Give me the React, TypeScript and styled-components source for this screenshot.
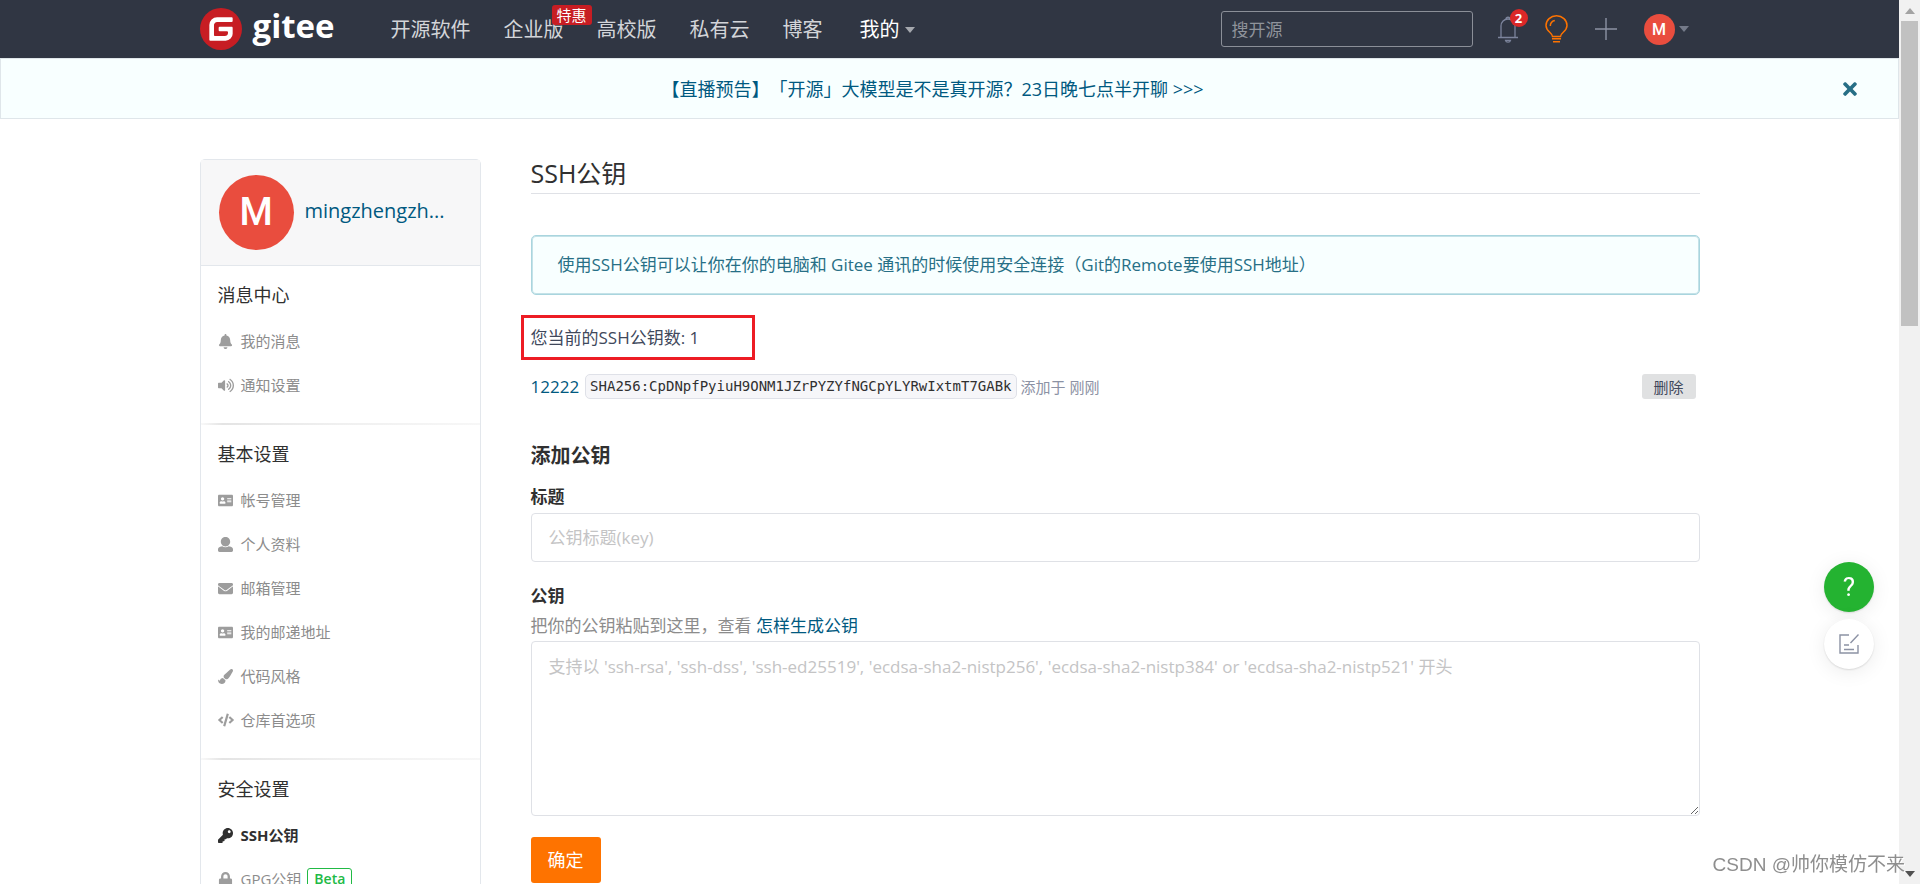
import React from 'react';
import styled, { createGlobalStyle } from 'styled-components';
import {
  FaAddressCard,
  FaBell,
  FaCode,
  FaEnvelope,
  FaKey,
  FaLock,
  FaPaintBrush,
  FaTimes,
  FaVolumeUp,
} from 'react-icons/fa';

const GlobalStyle = createGlobalStyle`
  *, *::before, *::after { box-sizing: border-box; }
  body {
    margin: 0;
    overflow: hidden;
    background: #fff;
    color: #40485b;
    font-family: "Open Sans", "Noto Sans CJK SC", sans-serif;
    font-size: 17px;
    line-height: 24px;
  }
  button, input, textarea { font: inherit; }
  a { color: #005980; text-decoration: none; }
  h1, h2, h3, p, ul { margin: 0; padding: 0; }
`;

const Window = styled.div`
  display: grid;
  grid-template-columns: minmax(0, 1fr) 21px;
  height: 100vh;
`;

const Page = styled.div`
  overflow: hidden;
`;

const Container = styled.div`
  width: 100%;
  max-width: 1500px;
  margin: 0 auto;
  display: flex;
`;

/* ---------- top bar ---------- */

const Header = styled.header`
  background: #303643;
  display: flex;
`;

const HeaderRow = styled(Container)`
  height: 58px;
  align-items: center;
`;

const Logo = styled.a`
  display: flex;
  align-items: center;
  gap: 11px;
  color: #fff;
  width: 191px;
`;

const LogoText = styled.span`
  font-size: 33px;
  font-weight: 700;
  line-height: 40px;
  padding-bottom: 6px;
`;

const Nav = styled.nav`
  display: flex;
  align-items: center;
  gap: 33px;
  flex: 1;
  padding-top: 2px;
  font-size: 20px;
  line-height: 30px;
`;

const NavLink = styled.a`
  position: relative;
  color: #d3d5d9;
`;

const Promo = styled.span`
  position: absolute;
  left: 48px;
  top: -10px;
  padding: 0 5px;
  border-radius: 3px;
  background: #c71d23;
  color: #fff;
  font-size: 15px;
  line-height: 20px;
  white-space: nowrap;
`;

const NavMenu = styled.button`
  display: flex;
  align-items: center;
  gap: 5px;
  padding: 0 4px;
  border: 0;
  background: none;
  color: #fff;
`;

const Caret = styled.span<{ $color: string }>`
  border: 5px solid transparent;
  border-top: 6px solid ${(p) => p.$color};
  border-bottom: 0;
`;

const Search = styled.input`
  width: 252px;
  height: 36px;
  padding: 0 10px;
  border: 1px solid #8b8f98;
  border-radius: 3px;
  background: transparent;
  color: #fff;
  &::placeholder { color: #8f939b; opacity: 1; }
`;

const Tools = styled.div`
  display: flex;
  align-items: center;
  gap: 27px;
  padding: 0 11px 0 25px;
`;

const ToolButton = styled.button`
  position: relative;
  display: flex;
  align-items: center;
  gap: 4px;
  padding: 0;
  border: 0;
  background: none;
`;

const Count = styled.span`
  position: absolute;
  left: 12px;
  top: -7px;
  width: 18px;
  height: 18px;
  border-radius: 50%;
  background: #db2828;
  color: #fff;
  font-size: 13px;
  font-weight: 700;
  line-height: 18px;
  text-align: center;
`;

const Avatar = styled.span<{ $size: number; $font: number }>`
  flex: none;
  width: ${(p) => p.$size}px;
  height: ${(p) => p.$size}px;
  border-radius: 50%;
  background: #e94d3e;
  color: #fff;
  font-family: Roboto, sans-serif;
  font-weight: 500;
  font-size: ${(p) => p.$font}px;
  line-height: ${(p) => p.$size}px;
  text-align: center;
`;

const Banner = styled.div`
  display: flex;
  align-items: center;
  height: 61px;
  padding: 0 38px 0 24px;
  border: 1px solid #dfe6ea;
  background: #f8ffff;
`;

const BannerLink = styled.a`
  flex: 1;
  font-size: 18px;
  text-align: center;
  text-spacing-trim: space-all;
`;

const CloseButton = styled.button`
  display: flex;
  padding: 0;
  border: 0;
  background: none;
  color: #276f86;
`;

/* ---------- side bar ---------- */

const Body = styled(Container)`
  padding-top: 40px;
  gap: 50px;
  align-items: flex-start;
`;

const Sidebar = styled.aside`
  flex: none;
  width: 281px;
  border: 1px solid #e3e7ec;
  border-radius: 5px;
`;

const Profile = styled.div`
  display: flex;
  align-items: center;
  gap: 11px;
  height: 106px;
  padding: 0 18px;
  border-bottom: 1px solid #e3e7ec;
  background: #f7f7f8;
  font-size: 20px;
`;

const UserName = styled.a`
  padding-bottom: 4px;
`;

const Section = styled.section`
  padding: 17px 17px 16px;
  & + & {
    border-top: 2px solid;
    border-image: linear-gradient(to right, #fafafa, #e4e4e4 8%, #f0f0f0 50%, #f7f7f7) 1;
  }
`;

const SectionTitle = styled.h3`
  margin-bottom: 12px;
  color: #303030;
  font-size: 18px;
  font-weight: 400;
  line-height: 24px;
`;

const List = styled.ul`
  list-style: none;
`;

const ItemLink = styled.a<{ $active?: boolean }>`
  display: flex;
  align-items: center;
  height: 44px;
  color: ${(p) => (p.$active ? '#303030' : '#8c8c8c')};
  font-size: 15px;
  font-weight: ${(p) => (p.$active ? 700 : 400)};
`;

const ItemIcon = styled.span<{ $active?: boolean }>`
  display: flex;
  justify-content: center;
  width: 16px;
  margin-right: 7px;
  color: ${(p) => (p.$active ? '#303030' : '#9d9d9d')};
`;

const Beta = styled.span`
  margin-left: 6px;
  padding: 0 6px;
  border: 1px solid #21ba45;
  border-radius: 3px;
  color: #21ba45;
  font-size: 14px;
  font-weight: 600;
  line-height: 20px;
`;

/* ---------- main column ---------- */

const Main = styled.main`
  flex: 1;
  min-width: 0;
`;

const Title = styled.h1`
  padding-bottom: 6px;
  border-bottom: 1px solid #dfe1e6;
  color: #303030;
  font-size: 25px;
  font-weight: 400;
  line-height: 28px;
`;

const Notice = styled.p`
  margin-top: 41px;
  padding: 17px 26px;
  border: 1px solid #a9d5de;
  border-radius: 5px;
  box-shadow: inset 0 0 0 1px #c4e2e8;
  background: #f8ffff;
  color: #276f86;
`;

const KeyCount = styled.p`
  width: 234px;
  margin: 20px 0 14px -10px;
  padding: 8px 7px 7px;
  border: 3px solid #ed1c24;
`;

const KeyRow = styled.div`
  display: flex;
  align-items: center;
  height: 25px;
  padding-right: 4px;
`;

const Fingerprint = styled.code`
  margin: 0 4px 0 6px;
  padding: 0 4px;
  border: 1px solid #dfe1e8;
  border-radius: 5px;
  background: #f6f6f9;
  color: #303030;
  font-family: "DejaVu Sans Mono", monospace;
  font-size: 14px;
  line-height: 23px;
`;

const Added = styled.span`
  flex: 1;
  color: #8c92a4;
  font-size: 15px;
`;

const DeleteButton = styled.button`
  width: 54px;
  height: 25px;
  padding: 0;
  border: 0;
  border-radius: 3px;
  background: #e0e1e2;
  color: #40485b;
  font-size: 15px;
  line-height: 24px;
`;

const Form = styled.form`
  display: flex;
  flex-direction: column;
  margin-top: 42px;
`;

const FormTitle = styled.h2`
  margin-bottom: 14px;
  color: #303030;
  font-size: 20px;
  line-height: 30px;
`;

const Label = styled.label`
  margin-bottom: 4px;
  color: #303030;
  font-weight: 700;
`;

const TextInput = styled.input`
  height: 49px;
  margin-bottom: 22px;
  padding: 0 17px;
  border: 1px solid #dfe1e6;
  border-radius: 4px;
  outline: none;
  &::placeholder { color: #c4c4c5; opacity: 1; }
`;

const Hint = styled.p`
  padding: 2px 0 3px;
  color: #8c8c8c;
`;

const TextArea = styled.textarea`
  height: 175px;
  padding: 13px 17px;
  border: 1px solid #dfe1e6;
  border-radius: 4px;
  outline: none;
  resize: vertical;
  &::placeholder { color: #c4c4c5; opacity: 1; }
`;

const Submit = styled.button`
  align-self: flex-start;
  height: 46px;
  margin-top: 21px;
  padding: 0 17px;
  border: 0;
  border-radius: 3px;
  background: #fe7300;
  color: #fff;
  font-size: 18px;
`;

/* ---------- overlays ---------- */

const FloatButtons = styled.div`
  position: fixed;
  right: 46px;
  bottom: 215px;
  display: flex;
  flex-direction: column;
  gap: 7px;
`;

const RoundButton = styled.button<{ $fill: string }>`
  display: flex;
  align-items: center;
  justify-content: center;
  width: 50px;
  height: 50px;
  padding: 0;
  border: 0;
  border-radius: 50%;
  background: ${(p) => p.$fill};
  box-shadow: 0 1px 2px rgba(0, 0, 0, 0.12), 0 3px 20px rgba(0, 0, 0, 0.08);
  color: #fff;
  font-family: Roboto, sans-serif;
  font-size: 26px;
`;

const Watermark = styled.div`
  position: fixed;
  right: 15px;
  bottom: 5px;
  color: #8e8e8e;
  font-family: "Liberation Sans", "Noto Sans CJK SC", sans-serif;
  font-size: 19px;
  line-height: 28px;
  text-shadow: 1px 1px 0 #fff;
`;

const Scrollbar = styled.div`
  display: flex;
  flex-direction: column;
  align-items: center;
  background: #f1f1f1;
`;

const Thumb = styled.div`
  width: 17px;
  height: 305px;
  background: #c1c1c1;
`;

const ArrowBox = styled.div`
  display: flex;
  align-items: center;
  justify-content: center;
  height: 21px;
  &:last-child { margin-top: auto; }
`;

const UserIcon = () => (
  <svg width="15" height="15" viewBox="0 0 512 512" fill="currentColor">
    <path d="M256 0c88.366 0 160 71.634 160 160s-71.634 160-160 160S96 248.366 96 160 167.634 0 256 0zm183.283 333.821l-71.313-17.828c-74.923 53.89-165.738 41.864-223.94 0l-71.313 17.828C29.981 344.505 0 382.903 0 426.955V464c0 26.51 21.49 48 48 48h416c26.51 0 48-21.49 48-48v-37.045c0-44.052-29.981-82.45-72.717-93.134z" />
  </svg>
);

type Item = { label: string; icon: React.ReactNode; active?: boolean; beta?: boolean };

const sections: { title: string; items: Item[] }[] = [
  {
    title: '消息中心',
    items: [
      { label: '我的消息', icon: <FaBell size={15} /> },
      { label: '通知设置', icon: <FaVolumeUp size={17} /> },
    ],
  },
  {
    title: '基本设置',
    items: [
      { label: '帐号管理', icon: <FaAddressCard size={15} /> },
      { label: '个人资料', icon: <UserIcon /> },
      { label: '邮箱管理', icon: <FaEnvelope size={15} /> },
      { label: '我的邮递地址', icon: <FaAddressCard size={15} /> },
      { label: '代码风格', icon: <FaPaintBrush size={15} /> },
      { label: '仓库首选项', icon: <FaCode size={18} /> },
    ],
  },
  {
    title: '安全设置',
    items: [
      { label: 'SSH公钥', icon: <FaKey size={15} />, active: true },
      { label: 'GPG公钥', icon: <FaLock size={15} />, beta: true },
    ],
  },
];

export default function App() {
  return (
    <Window>
      <GlobalStyle />
      <Page>
        <Header>
          <HeaderRow>
            <Logo href="#">
              <svg width="42" height="42" viewBox="0 0 24 24">
                <circle cx="12" cy="12" r="12" fill="#c71d23" />
                <path
                  fill="#fff"
                  d="M18.074 5.333c.328 0 .593.266.592.593v1.482a.594.594 0 0 1-.593.592H9.777c-.982 0-1.778.796-1.778 1.778v5.63c0 .327.266.592.593.592h5.63c.982 0 1.778-.796 1.778-1.778v-.296a.593.593 0 0 0-.592-.593h-4.15a.592.592 0 0 1-.592-.592v-1.482a.593.593 0 0 1 .593-.592h6.815c.327 0 .593.265.593.592v3.408a4 4 0 0 1-4 4H5.926a.593.593 0 0 1-.593-.593V9.778a4.444 4.444 0 0 1 4.445-4.444h8.296Z"
                />
              </svg>
              <LogoText>gitee</LogoText>
            </Logo>
            <Nav>
              <NavLink href="#">开源软件</NavLink>
              <NavLink href="#">
                企业版<Promo>特惠</Promo>
              </NavLink>
              <NavLink href="#">高校版</NavLink>
              <NavLink href="#">私有云</NavLink>
              <NavLink href="#">博客</NavLink>
              <NavMenu type="button">
                我的
                <Caret $color="#a5a8ae" />
              </NavMenu>
            </Nav>
            <Search type="search" placeholder="搜开源" aria-label="搜开源" />
            <Tools>
              <ToolButton type="button" aria-label="通知">
                <svg width="20" height="27" viewBox="0 0 20 27" fill="none" stroke="#7c849c" strokeWidth="1.3">
                  <path d="M0 21.5h20M3 21.500V10a7 7 0 0 1 14 0v11.500M8 3.200c0-2.600 4-2.600 4 0M7.500 24.300h5c-.5 2.300-4.500 2.300-5 0z" />
                </svg>
                <Count>2</Count>
              </ToolButton>
              <ToolButton type="button" aria-label="灵感">
                <svg width="23" height="28" viewBox="0 0 23 28" fill="none" stroke="#fe7300" strokeWidth="1.5">
                  <path d="M7.500 21.500c0-4-6.500-5-6.500-11a10.500 9.700 0 0 1 21 0c0 6-6.500 7-6.500 11zM7 23.800h9M8 26.700h7M5.300 11c0-3 1.700-5 4.500-5.600" />
                </svg>
              </ToolButton>
              <ToolButton type="button" aria-label="新建">
                <svg width="22" height="22" viewBox="0 0 22 22" fill="none" stroke="#8c92a4">
                  <path d="M11 0v22M0 11h22" strokeWidth="1.4" />
                </svg>
              </ToolButton>
              <ToolButton type="button" aria-label="用户菜单">
                <Avatar $size={31} $font={16}>M</Avatar>
                <Caret $color="#747a89" />
              </ToolButton>
            </Tools>
          </HeaderRow>
        </Header>

        <Banner>
          <BannerLink href="#">【直播预告】「开源」大模型是不是真开源？23日晚七点半开聊 &gt;&gt;&gt;</BannerLink>
          <CloseButton type="button" aria-label="关闭">
            <FaTimes size={20} />
          </CloseButton>
        </Banner>

        <Body>
          <Sidebar>
            <Profile>
              <Avatar $size={75} $font={38}>M</Avatar>
              <UserName href="#">mingzhengzh...</UserName>
            </Profile>
            {sections.map((section) => (
              <Section key={section.title}>
                <SectionTitle>{section.title}</SectionTitle>
                <List>
                  {section.items.map((item) => (
                    <li key={item.label}>
                      <ItemLink href="#" $active={item.active}>
                        <ItemIcon $active={item.active}>{item.icon}</ItemIcon>
                        {item.label}
                        {item.beta && <Beta>Beta</Beta>}
                      </ItemLink>
                    </li>
                  ))}
                </List>
              </Section>
            ))}
          </Sidebar>

          <Main>
            <Title>SSH公钥</Title>
            <Notice>使用SSH公钥可以让你在你的电脑和 Gitee 通讯的时候使用安全连接（Git的Remote要使用SSH地址）</Notice>
            <KeyCount>您当前的SSH公钥数: 1</KeyCount>
            <KeyRow>
              <a href="#">12222</a>
              <Fingerprint>SHA256:CpDNpfPyiuH9ONM1JZrPYZYfNGCpYLYRwIxtmT7GABk</Fingerprint>
              <Added>添加于 刚刚</Added>
              <DeleteButton type="button">删除</DeleteButton>
            </KeyRow>

            <Form onSubmit={(e) => e.preventDefault()}>
              <FormTitle>添加公钥</FormTitle>
              <Label htmlFor="key-title">标题</Label>
              <TextInput id="key-title" type="text" placeholder="公钥标题(key)" />
              <Label htmlFor="key-body">公钥</Label>
              <Hint>
                把你的公钥粘贴到这里，查看 <a href="#">怎样生成公钥</a>
              </Hint>
              <TextArea
                id="key-body"
                placeholder="支持以 'ssh-rsa', 'ssh-dss', 'ssh-ed25519', 'ecdsa-sha2-nistp256', 'ecdsa-sha2-nistp384' or 'ecdsa-sha2-nistp521' 开头"
              />
              <Submit type="submit">确定</Submit>
            </Form>
          </Main>
        </Body>
      </Page>

      <Scrollbar>
        <ArrowBox>
          <svg width="10" height="6" viewBox="0 0 10 6" fill="#a3a3a3">
            <path d="M5 0l5 6H0z" />
          </svg>
        </ArrowBox>
        <Thumb />
        <ArrowBox>
          <svg width="10" height="6" viewBox="0 0 10 6" fill="#505050">
            <path d="M0 0h10L5 6z" />
          </svg>
        </ArrowBox>
      </Scrollbar>

      <FloatButtons>
        <RoundButton type="button" $fill="#24b331" aria-label="帮助">?</RoundButton>
        <RoundButton type="button" $fill="#fff" aria-label="反馈">
          <svg width="20" height="20" viewBox="0 0 20 20" fill="none" stroke="#8c92a4" strokeWidth="1.4">
            <path d="M10 1H1v18h18v-8M19.500 0.500L11.500 9M5 11h5M5 15.500h10" />
          </svg>
        </RoundButton>
      </FloatButtons>
      <Watermark>CSDN @帅你模仿不来</Watermark>
    </Window>
  );
}
